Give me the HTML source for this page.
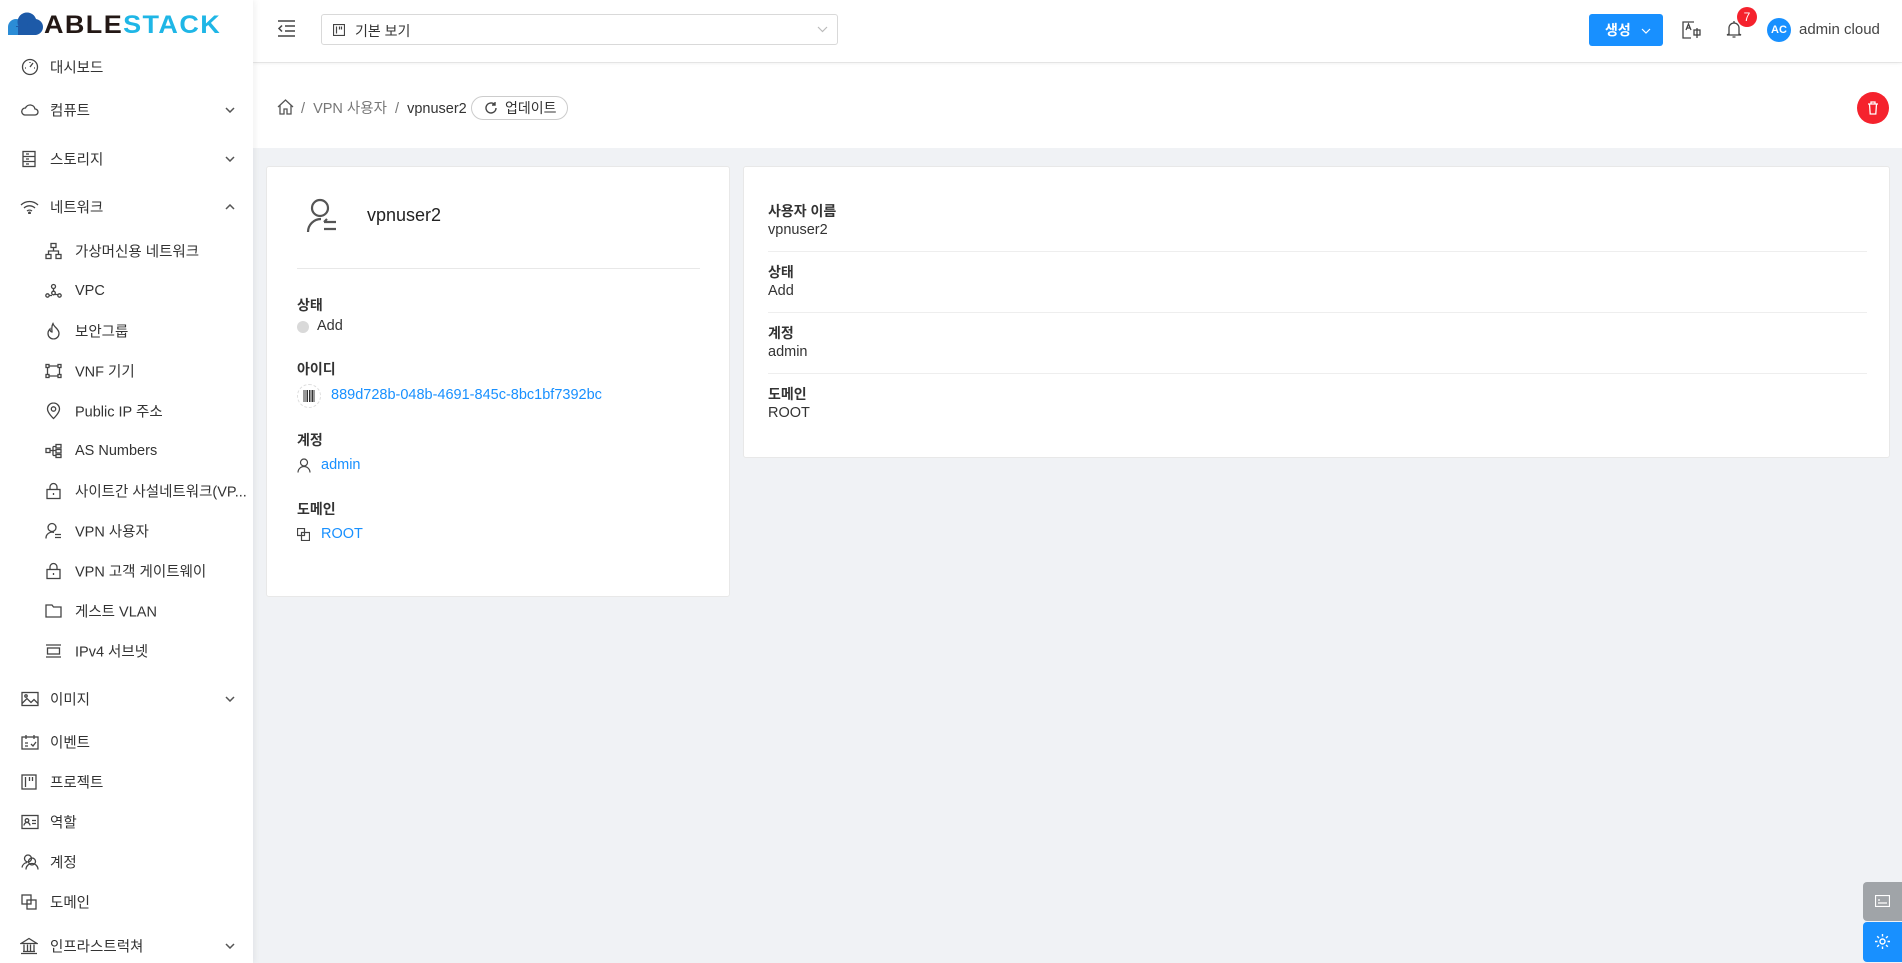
<!DOCTYPE html>
<html><head><meta charset="utf-8"><style>
*{box-sizing:border-box;margin:0;padding:0}
body{width:1902px;height:963px;overflow:hidden;background:#f0f2f5;font-family:"Liberation Sans","Noto Sans CJK KR",sans-serif;color:#333;position:relative}
.abs{position:absolute}
#side{left:0;top:0;width:253px;height:963px;background:#fff;box-shadow:2px 0 6px rgba(0,0,0,.06);z-index:2}
.it{position:absolute;font-size:14.5px;color:#333;white-space:nowrap;transform:translateY(-50%)}
.ic{position:absolute;transform:translateY(-50%)}
.chev{position:absolute;right:18px;transform:translateY(-50%)}
#hdr{left:253px;top:0;right:0;height:62px;background:#fff;box-shadow:0 1px 4px rgba(0,0,0,.08);z-index:1}
#bc{left:253px;top:62px;right:0;height:86px;background:#fff;border-top:1px solid #f0f0f0}
.card{background:#fff;border:1px solid #e8e8e8;border-radius:3px}
.lbl{position:absolute;font-size:14px;font-weight:bold;color:#333}
.val{position:absolute;font-size:14.5px;color:#333}
.lnk{color:#1890ff}
</style></head><body>
<div id="side" class="abs">
 <svg class="abs" style="left:7px;top:12px" width="38" height="24" viewBox="0 0 38 24"><circle cx="9" cy="15" r="8" fill="#2b8cd6"/><circle cx="20" cy="10" r="9.5" fill="#1d5aa8"/><circle cx="28" cy="15" r="8" fill="#1d5aa8"/><rect x="9" y="14" width="20" height="9" fill="#1d5aa8"/><rect x="1" y="15" width="10" height="8" fill="#2b8cd6"/></svg>
 <div class="abs" style="left:44px;top:11px;font-size:25px;font-weight:bold;letter-spacing:1.3px;line-height:28px;transform:scaleX(1.08);transform-origin:left"><span style="color:#231815">ABLE</span><span style="color:#1fb6e6">STACK</span></div>
 <svg class="ic" style="left:21px;top:67px" width="18" height="18" viewBox="0 0 18 18" fill="none" stroke="#444" stroke-width="1.3"><circle cx="9" cy="9" r="7.5"/><path d="M9 9l3-4M4 10h1M13 10h1M9 4v1"/></svg><div class="it" style="left:50px;top:67px">대시보드</div>
 <svg class="ic" style="left:21px;top:110px" width="18" height="14" viewBox="0 0 18 14" fill="none" stroke="#444" stroke-width="1.3"><path d="M4 12h10a3 3 0 0 0 0-6 5 5 0 0 0-9.5-1A3.5 3.5 0 0 0 4 12z"/></svg><div class="it" style="left:50px;top:110px">컴퓨트</div><svg class="chev" style="top:110px" width="10" height="6"><path d="M1 1l4 4 4-4" fill="none" stroke="#555" stroke-width="1.5"/></svg>
 <svg class="ic" style="left:22px;top:159px" width="14" height="17" viewBox="0 0 14 17" fill="none" stroke="#444" stroke-width="1.3"><rect x="1" y="1" width="12" height="15"/><path d="M1 6h12M1 11h12M4 3.5h3M4 8.5h3M4 13.5h3"/></svg><div class="it" style="left:50px;top:159px">스토리지</div><svg class="chev" style="top:159px" width="10" height="6"><path d="M1 1l4 4 4-4" fill="none" stroke="#555" stroke-width="1.5"/></svg>
 <svg class="ic" style="left:20px;top:207px" width="19" height="14" viewBox="0 0 19 14" fill="none" stroke="#444" stroke-width="1.3"><path d="M1 5a12 12 0 0 1 17 0M4 8a8 8 0 0 1 11 0M7 11a4 4 0 0 1 5 0"/><circle cx="9.5" cy="13" r=".8" fill="#444"/></svg><div class="it" style="left:50px;top:207px">네트워크</div><svg class="chev" style="top:207px" width="10" height="6"><path d="M1 5l4-4 4 4" fill="none" stroke="#555" stroke-width="1.5"/></svg>
 <svg class="ic" style="left:45px;top:251px" width="17" height="17" viewBox="0 0 17 17" fill="none" stroke="#444" stroke-width="1.3"><rect x="6" y="1" width="5" height="4"/><rect x="1" y="12" width="5" height="4"/><rect x="11" y="12" width="5" height="4"/><path d="M8.5 5v3.5M3.5 12V8.5h10V12"/></svg><div class="it" style="left:75px;top:251px">가상머신용 네트워크</div>
 <svg class="ic" style="left:45px;top:291px" width="17" height="15" viewBox="0 0 17 15" fill="none" stroke="#444" stroke-width="1.3"><circle cx="8.5" cy="3" r="2"/><circle cx="2.5" cy="12" r="1.7"/><circle cx="14.5" cy="12" r="1.7"/><circle cx="8.5" cy="9.5" r="1.8"/><path d="M8.5 5v2.7M4 12h3M10 11h3"/></svg><div class="it" style="left:75px;top:291px">VPC</div>
 <svg class="ic" style="left:46px;top:331px" width="15" height="17" viewBox="0 0 15 17" fill="none" stroke="#444" stroke-width="1.3"><path d="M7 1c1 4 6 5 6 10a5.5 5.5 0 0 1-11 0c0-2 1-3.5 2-4.5 0 2 1 3 2 3 0-3-1-5 1-8.5z"/></svg><div class="it" style="left:75px;top:331px">보안그룹</div>
 <svg class="ic" style="left:45px;top:371px" width="17" height="15" viewBox="0 0 17 15" fill="none" stroke="#444" stroke-width="1.3"><rect x="1" y="1" width="3" height="3"/><rect x="13" y="1" width="3" height="3"/><rect x="1" y="11" width="3" height="3"/><rect x="13" y="11" width="3" height="3"/><path d="M4 2.5h9M4 12.5h9M2.5 4v7M14.5 4v7"/></svg><div class="it" style="left:75px;top:371px">VNF 기기</div>
 <svg class="ic" style="left:46px;top:411px" width="15" height="17" viewBox="0 0 15 17" fill="none" stroke="#444" stroke-width="1.3"><path d="M7.5 16s6-5.5 6-9.5a6 6 0 0 0-12 0c0 4 6 9.5 6 9.5z"/><circle cx="7.5" cy="6.5" r="2.2"/></svg><div class="it" style="left:75px;top:411px">Public IP 주소</div>
 <svg class="ic" style="left:45px;top:451px" width="17" height="15" viewBox="0 0 17 15" fill="none" stroke="#444" stroke-width="1.3"><rect x="1" y="5" width="4" height="4"/><rect x="11" y="1" width="5" height="3.5"/><rect x="11" y="6" width="5" height="3.5"/><rect x="11" y="11" width="5" height="3"/><path d="M5 7h6M8 3v9M8 3h3M8 12h3"/></svg><div class="it" style="left:75px;top:451px">AS Numbers</div>
 <svg class="ic" style="left:46px;top:491px" width="15" height="17" viewBox="0 0 15 17" fill="none" stroke="#444" stroke-width="1.3"><rect x="1" y="7" width="13" height="9"/><path d="M4 7V4.5a3.5 3.5 0 0 1 7 0V7M7.5 10.5v2"/></svg><div class="it" style="left:75px;top:491px">사이트간 사설네트워크(VP...</div>
 <svg class="ic" style="left:45px;top:531px" width="17" height="17" viewBox="0 0 17 17" fill="none" stroke="#444" stroke-width="1.3"><circle cx="7" cy="5" r="4"/><path d="M1 16a6 6 0 0 1 8-6M10 12h6M10 15h6"/></svg><div class="it" style="left:75px;top:531px">VPN 사용자</div>
 <svg class="ic" style="left:46px;top:571px" width="15" height="17" viewBox="0 0 15 17" fill="none" stroke="#444" stroke-width="1.3"><rect x="1" y="7" width="13" height="9"/><path d="M4 7V4.5a3.5 3.5 0 0 1 7 0V7M7.5 10.5v2"/></svg><div class="it" style="left:75px;top:571px">VPN 고객 게이트웨이</div>
 <svg class="ic" style="left:45px;top:611px" width="17" height="14" viewBox="0 0 17 14" fill="none" stroke="#444" stroke-width="1.3"><path d="M1 1h6l1.5 2H16v10H1z"/></svg><div class="it" style="left:75px;top:611px">게스트 VLAN</div>
 <svg class="ic" style="left:45px;top:651px" width="17" height="14" viewBox="0 0 17 14" fill="none" stroke="#444" stroke-width="1.3"><path d="M1 1h15M1 13h15"/><rect x="2.5" y="4" width="12" height="6"/></svg><div class="it" style="left:75px;top:651px">IPv4 서브넷</div>
 <svg class="ic" style="left:21px;top:699px" width="18" height="15" viewBox="0 0 18 15" fill="none" stroke="#444" stroke-width="1.3"><rect x="1" y="1" width="16" height="13"/><path d="M1 12l5-5 4 4 3-3 4 4"/><circle cx="5" cy="4.5" r="1.2"/></svg><div class="it" style="left:50px;top:699px">이미지</div><svg class="chev" style="top:699px" width="10" height="6"><path d="M1 1l4 4 4-4" fill="none" stroke="#555" stroke-width="1.5"/></svg>
 <svg class="ic" style="left:21px;top:742px" width="18" height="16" viewBox="0 0 18 16" fill="none" stroke="#444" stroke-width="1.3"><rect x="1" y="3" width="16" height="12"/><path d="M5 1v4M13 1v4M4 9h3M4 12h3M10 10l2 2 3-4"/></svg><div class="it" style="left:50px;top:742px">이벤트</div>
 <svg class="ic" style="left:21px;top:782px" width="16" height="16" viewBox="0 0 16 16" fill="none" stroke="#444" stroke-width="1.3"><rect x="1" y="1" width="14" height="14"/><path d="M4.5 3v10M8.5 3v4M11.5 3v4"/></svg><div class="it" style="left:50px;top:782px">프로젝트</div>
 <svg class="ic" style="left:21px;top:822px" width="18" height="15" viewBox="0 0 18 15" fill="none" stroke="#444" stroke-width="1.3"><rect x="1" y="1" width="16" height="13"/><circle cx="6" cy="6" r="1.8"/><path d="M3 11a3 3 0 0 1 6 0M11 6h4M11 9h4"/></svg><div class="it" style="left:50px;top:822px">역할</div>
 <svg class="ic" style="left:21px;top:862px" width="19" height="17" viewBox="0 0 19 17" fill="none" stroke="#444" stroke-width="1.3"><circle cx="7" cy="5" r="3.5"/><circle cx="11" cy="8" r="3.5"/><path d="M1 14a6 6 0 0 1 5-5M5 16a6 6 0 0 1 12 0"/></svg><div class="it" style="left:50px;top:862px">계정</div>
 <svg class="ic" style="left:21px;top:902px" width="16" height="16" viewBox="0 0 16 16" fill="none" stroke="#444" stroke-width="1.3"><rect x="1" y="1" width="9" height="9"/><rect x="6" y="6" width="9" height="9"/></svg><div class="it" style="left:50px;top:902px">도메인</div>
 <svg class="ic" style="left:20px;top:946px" width="18" height="17" viewBox="0 0 18 17" fill="none" stroke="#444" stroke-width="1.3"><path d="M1 6L9 1l8 5zM1 16h16M3 14h12M4 7v7M7.5 7v7M10.5 7v7M14 7v7"/></svg><div class="it" style="left:50px;top:946px">인프라스트럭쳐</div><svg class="chev" style="top:946px" width="10" height="6"><path d="M1 1l4 4 4-4" fill="none" stroke="#555" stroke-width="1.5"/></svg>
</div>

<div id="hdr" class="abs">
 <svg class="abs" style="left:24px;top:20px" width="19" height="17" viewBox="0 0 19 17" fill="none" stroke="#444" stroke-width="1.5"><path d="M1 1h17M8 6h10M8 11h10M1 16h17M5 5.5L2 8.5l3 3"/></svg>
 <div class="abs" style="left:68px;top:14px;width:517px;height:31px;border:1px solid #d9d9d9;border-radius:3px">
  <svg class="abs" style="left:11px;top:9px" width="12" height="12" viewBox="0 0 12 12" fill="none" stroke="#444" stroke-width="1.2"><rect x=".5" y=".5" width="11" height="11"/><path d="M3.5 2.5v7M6.5 2.5v3M8.5 2.5v3"/></svg>
  <div class="abs" style="left:33px;top:6px;font-size:14px;color:#333">기본 보기</div>
  <svg class="abs" style="right:9px;top:11px" width="11" height="7"><path d="M1 1l4.5 4.5L10 1" fill="none" stroke="#bbb" stroke-width="1.2"/></svg>
 </div>
 <div class="abs" style="left:1336px;top:14px;width:74px;height:32px;background:#1890ff;border-radius:3px;color:#fff;font-size:14px;font-weight:bold;line-height:32px;padding-left:16px">생성 <svg width="10" height="7" style="margin-left:6px"><path d="M1 1l4 4 4-4" fill="none" stroke="#fff" stroke-width="1.2"/></svg></div>
 <svg class="abs" style="left:1429px;top:21px" width="20" height="18" viewBox="0 0 20 18" fill="none" stroke="#444" stroke-width="1.3"><path d="M12 1H1v16h8"/><path d="M4 9l2.5-6L9 9M5 7h3"/><rect x="12" y="9" width="6" height="5"/><path d="M15 7v10"/></svg>
 <svg class="abs" style="left:1473px;top:20px" width="16" height="19" viewBox="0 0 16 19" fill="none" stroke="#444" stroke-width="1.3"><path d="M3 14V8a5 5 0 0 1 10 0v6l2 1H1z"/><path d="M6.5 17h3M8 1v2"/></svg>
 <div class="abs" style="left:1484px;top:7px;width:20px;height:20px;border-radius:50%;background:#f5222d;color:#fff;font-size:12px;text-align:center;line-height:20px">7</div>
 <div class="abs" style="left:1514px;top:18px;width:24px;height:24px;border-radius:50%;background:#1890ff;color:#fff;font-size:11px;font-weight:bold;text-align:center;line-height:24px">AC</div>
 <div class="abs" style="left:1546px;top:21px;font-size:15px;color:#444">admin cloud</div>
</div>

<div id="bc" class="abs">
 <svg class="abs" style="left:24px;top:36px" width="17" height="16" viewBox="0 0 17 16" fill="none" stroke="#555" stroke-width="1.3"><path d="M1 8L8.5 1 16 8M3 6.5V15h4v-5h3v5h4V6.5"/></svg>
 <div class="abs" style="left:48px;top:34px;font-size:14.5px;color:#777">/ &nbsp;VPN 사용자 &nbsp;/ &nbsp;<span style="color:#333">vpnuser2</span></div>
 <div class="abs" style="left:218px;top:33px;width:97px;height:24px;border:1px solid #ccc;border-radius:12px;font-size:14px;color:#333;line-height:22px;padding-left:33px">업데이트</div>
 <svg class="abs" style="left:231px;top:38px" width="14" height="14" viewBox="0 0 14 14" fill="none" stroke="#444" stroke-width="1.4"><path d="M12 7a5 5 0 1 1-1.5-3.6M11 1v3h-3"/></svg>
 <div class="abs" style="left:1604px;top:29px;width:32px;height:32px;border-radius:50%;background:#f5222d"></div>
 <svg class="abs" style="left:1614px;top:38px" width="12" height="14" viewBox="0 0 12 14" fill="none" stroke="#fff" stroke-width="1.3"><path d="M1 3h10M4 3V1h4v2M2.5 3l.7 10h5.6l.7-10"/></svg>
</div>

<div class="card abs" style="left:266px;top:166px;width:464px;height:431px">
 <svg class="abs" style="left:38px;top:31px" width="34" height="36" viewBox="0 0 34 36" fill="none" stroke="#555" stroke-width="2.2"><circle cx="15" cy="10" r="8"/><path d="M3 34a13 13 0 0 1 13-13M19 24h12M19 31h12M22 21l-3 3"/></svg>
 <div class="abs" style="left:100px;top:38px;font-size:18px;color:#222">vpnuser2</div>
 <div class="abs" style="left:30px;top:101px;width:403px;height:1px;background:#e8e8e8"></div>
 <div class="lbl" style="left:30px;top:128px">상태</div>
 <div class="abs" style="left:30px;top:154px;width:12px;height:12px;border-radius:50%;background:#d9d9d9"></div>
 <div class="val" style="left:50px;top:151px">Add</div>
 <div class="lbl" style="left:30px;top:192px">아이디</div>
 <div class="abs" style="left:30px;top:217px;width:24px;height:24px;border-radius:50%;border:1px dashed #ddd"></div>
 <svg class="abs" style="left:36px;top:223px" width="12" height="12" viewBox="0 0 12 12" stroke="#333" stroke-width="1"><path d="M1 0v12M3 0v12M4.5 0v12M6.5 0v12M8 0v12M9.5 0v12M11 0v12"/></svg>
 <div class="val lnk" style="left:64px;top:220px">889d728b-048b-4691-845c-8bc1bf7392bc</div>
 <div class="lbl" style="left:30px;top:263px">계정</div>
 <svg class="abs" style="left:30px;top:291px" width="14" height="15" viewBox="0 0 14 15" fill="none" stroke="#444" stroke-width="1.2"><circle cx="7" cy="4.5" r="3.5"/><path d="M1 14.5a6 6 0 0 1 12 0"/></svg>
 <div class="val lnk" style="left:54px;top:290px">admin</div>
 <div class="lbl" style="left:30px;top:332px">도메인</div>
 <svg class="abs" style="left:30px;top:361px" width="13" height="13" viewBox="0 0 13 13" fill="none" stroke="#444" stroke-width="1.2"><rect x=".5" y=".5" width="7" height="7"/><rect x="4.5" y="4.5" width="8" height="8"/></svg>
 <div class="val lnk" style="left:54px;top:359px">ROOT</div>
</div>

<div class="card abs" style="left:743px;top:166px;width:1147px;height:292px">
 <div class="lbl" style="left:24px;top:34px">사용자 이름</div><div class="val" style="left:24px;top:55px">vpnuser2</div>
 <div class="abs" style="left:24px;top:84px;width:1099px;height:1px;background:#eee"></div>
 <div class="lbl" style="left:24px;top:95px">상태</div><div class="val" style="left:24px;top:116px">Add</div>
 <div class="abs" style="left:24px;top:145px;width:1099px;height:1px;background:#eee"></div>
 <div class="lbl" style="left:24px;top:156px">계정</div><div class="val" style="left:24px;top:177px">admin</div>
 <div class="abs" style="left:24px;top:206px;width:1099px;height:1px;background:#eee"></div>
 <div class="lbl" style="left:24px;top:217px">도메인</div><div class="val" style="left:24px;top:238px">ROOT</div>
</div>

<div class="abs" style="left:1863px;top:882px;width:39px;height:39px;background:#a0a4a8;border-radius:4px 0 0 4px"></div>
<svg class="abs" style="left:1875px;top:895px" width="15" height="12" viewBox="0 0 15 12" fill="none" stroke="#fff" stroke-width="1.2"><rect x=".5" y=".5" width="14" height="11"/><path d="M3 8h9M3 5h2"/></svg>
<div class="abs" style="left:1863px;top:922px;width:39px;height:40px;background:#1890ff;border-radius:4px 0 0 4px"></div>
<svg class="abs" style="left:1874px;top:933px" width="17" height="17" viewBox="0 0 17 17" fill="none" stroke="#fff" stroke-width="1.4"><circle cx="8.5" cy="8.5" r="2.5"/><path d="M8.5 1v2.5M8.5 13.5V16M1 8.5h2.5M13.5 8.5H16M3.2 3.2l1.8 1.8M12 12l1.8 1.8M3.2 13.8L5 12M12 5l1.8-1.8"/></svg>
</body></html>
